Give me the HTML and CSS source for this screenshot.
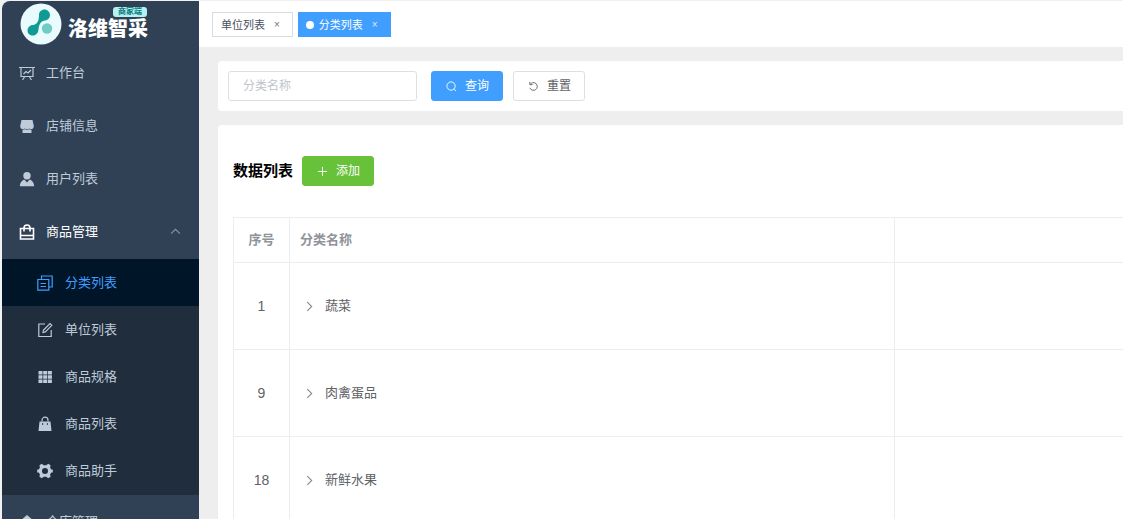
FILE: index.html
```html
<!DOCTYPE html>
<html lang="zh-CN">
<head>
<meta charset="utf-8">
<title>洛维智采 - 分类列表</title>
<link rel="stylesheet" href="styles.css">
</head>
<body>
<div class="app">
  <aside class="sidebar">
    <div class="brand">
      <svg class="brand-mark" viewBox="0 0 42 42" aria-hidden="true">
        <circle cx="21" cy="21" r="20.5" fill="#e9fbfc"/>
        <path d="M19 12c0-3.200 2.500-5.500 5.500-5.500S30 9 30 12s-2.500 5.500-5.500 5.500c-4 .8-5.500 4-6 9-.3 3.500-2.500 6-5.500 6S7.500 30.500 7.500 27.500s2.500-5.500 5.500-5.500c4-.5 6-4 6-10z" fill="#0f9a94"/>
        <circle cx="27" cy="25.500" r="5.200" fill="#6fcdc3"/>
      </svg>
      <div class="brand-text">
        <span class="brand-badge">商家端</span>
        <span class="brand-name">洛维智采</span>
      </div>
    </div>
    <nav>
      <a class="item" href="#"><svg class="icon" viewBox="0 0 16 16"><g class="line"><path d="M0 2.500h16M2 2.500v9h12v-9M5.500 12l-2 3M10.500 12l2 3M4.500 9l2.500-2.500L9 8l3-3"/></g></svg><span>工作台</span></a>
      <a class="item" href="#"><svg class="icon" viewBox="0 0 16 16"><path d="M2.500 2h11l1.300 6c0 1.500-.6 2.500-1.300 2.700-1.500.5-2.500.2-3.200-.3-1.400.8-3.200.8-4.600 0-.7.500-1.700.8-3.200.3C1.800 10.500 1.200 9.500 1.200 8zM3.500 11.700c1 0 1.800-.2 2.300-.5 1.400.6 3 .6 4.400 0 .5.300 1.300.5 2.300.5V15h-9z"/></svg><span>店铺信息</span></a>
      <a class="item" href="#"><svg class="icon" viewBox="0 0 16 16"><circle cx="8" cy="4.700" r="3.700"/><path d="M.8 15.200c.2-3.500 1.800-5.700 4.500-6.700L8 11.500l2.700-3c2.700 1 4.300 3.200 4.500 6.700z"/></svg><span>用户列表</span></a>
      <a class="item open" href="#"><svg class="icon" viewBox="0 0 16 16"><g class="line thick"><path d="M1.500 4.500h13v10.500h-13zM5 7.500V4a3 3 0 0 1 6 0v3.500M1.500 11.500h13"/></g></svg><span>商品管理</span><svg class="caret" viewBox="0 0 10 10"><path d="M1 7l4-4 4 4"/></svg></a>
      <div class="submenu">
        <a class="subitem active" href="#"><svg class="icon" viewBox="0 0 16 16"><g class="line"><path d="M.8 4.500h11v10.700h-11zM4.500 4.500V1h10.700v11h-3.400M3.500 8.500h5.500M3.500 11.500h5.500"/></g></svg><span>分类列表</span></a>
        <a class="subitem" href="#"><svg class="icon" viewBox="0 0 16 16"><g class="line"><path d="M8 2H1.800v12.500h12.400V8M6 10.500l.5-2.500 6.500-6.500 1.800 1.800L8.300 9.900z"/></g></svg><span>单位列表</span></a>
        <a class="subitem" href="#"><svg class="icon" viewBox="0 0 16 16"><path d="M1.500 2h4v3.500h-4zM6.200 2h4v3.500h-4zM10.900 2h4v3.500h-4zM1.500 6.300h4v3.500h-4zM6.200 6.300h4v3.500h-4zM10.900 6.300h4v3.500h-4zM1.500 10.600h4v3.500h-4zM6.200 10.600h4v3.500h-4zM10.900 10.600h4v3.500h-4z"/></svg><span>商品规格</span></a>
        <a class="subitem" href="#"><svg class="icon" viewBox="0 0 16 16"><path fill-rule="evenodd" d="M2.500 5.500h11l1 9.500h-13zM5 7.300v1.400h1.200V7.300zM9.800 7.300v1.400H11V7.300z"/><g class="line"><path d="M5 5.500V4.200a3 3 0 0 1 6 0v1.300"/></g></svg><span>商品列表</span></a>
        <a class="subitem" href="#"><svg class="icon" viewBox="0 0 16 16"><path fill-rule="evenodd" d="M4.800.8l1.900 1.400h2.600L11.200.8l2.400 1.500-.5 2.200 1.100 2h1.600v3h-1.600l-1.100 2 .5 2.200-2.400 1.500-1.900-1.400H6.700l-1.900 1.400-2.400-1.500.5-2.200-1.100-2H.2v-3h1.600l1.100-2-.5-2.200zM8 5a3 3 0 1 0 0 6 3 3 0 0 0 0-6z"/></svg><span>商品助手</span></a>
      </div>
      <a class="item" href="#"><svg class="icon" viewBox="0 0 16 16"><path d="M8 1l7 6h-2v8H3V7H1z"/></svg><span>仓库管理</span></a>
    </nav>
  </aside>
  <div class="page">
    <header class="tags">
      <a class="tag" href="#">单位列表<span class="close">×</span></a>
      <a class="tag current" href="#"><i class="dot"></i>分类列表<span class="close">×</span></a>
    </header>
    <main class="content">
      <form class="card search">
        <input class="field" type="text" placeholder="分类名称" aria-label="分类名称">
        <button class="btn primary" type="button"><svg class="btn-icon" viewBox="0 0 12 12"><circle cx="5.500" cy="5.500" r="4.500"/><path d="M9 9l2 2"/></svg>查询</button>
        <button class="btn" type="button"><svg class="btn-icon" viewBox="0 0 12 12"><path d="M2 1v3h3M2.300 3.800a4.200 4.200 0 1 1-.3 3.700"/></svg>重置</button>
      </form>
      <section class="card list">
        <div class="list-head">
          <h1 class="title">数据列表</h1>
          <button class="btn success" type="button"><svg class="btn-icon" viewBox="0 0 12 12"><path d="M6 1v10M1 6h10"/></svg>添加</button>
        </div>
        <table class="grid">
          <colgroup><col class="col-no"><col class="col-name"><col></colgroup>
          <thead><tr><th class="no">序号</th><th>分类名称</th><th></th></tr></thead>
          <tbody>
            <tr><td class="no">1</td><td><svg class="expand" viewBox="0 0 10 10"><path d="M3 1l4 4-4 4"/></svg>蔬菜</td><td></td></tr>
            <tr><td class="no">9</td><td><svg class="expand" viewBox="0 0 10 10"><path d="M3 1l4 4-4 4"/></svg>肉禽蛋品</td><td></td></tr>
            <tr><td class="no">18</td><td><svg class="expand" viewBox="0 0 10 10"><path d="M3 1l4 4-4 4"/></svg>新鲜水果</td><td></td></tr>
          </tbody>
        </table>
      </section>
    </main>
  </div>
</div>
</body>
</html>
```

FILE: styles.css
```css
* { box-sizing: border-box; }

body {
  margin: 0;
  background: #f0f1f2;
  color: #606266;
  font: 13px/20px "Liberation Sans", "Noto Sans CJK SC", sans-serif;
}

a { color: inherit; text-decoration: none; }

.app {
  display: flex;
  height: 100vh;
  overflow: hidden;
  padding: 1px 0 0 2px;
}

/* Sidebar */
.sidebar {
  flex: 0 0 197px;
  overflow: hidden;
  background: #304156;
  border-top-left-radius: 8px;
  color: #bfcbd9;
}

.brand {
  display: flex;
  align-items: flex-start;
  gap: 6px;
  height: 45px;
  padding: 2px 0 0 18px;
}

.brand-mark { width: 42px; height: 42px; }

.brand-text {
  display: flex;
  flex-direction: column;
  padding-top: 4px;
}

.brand-badge {
  align-self: flex-end;
  width: 34px;
  margin-right: 1px;
  border-radius: 3px;
  background: #b5f1f0;
  color: #0b7c80;
  font-size: 8px;
  font-weight: 700;
  line-height: 10px;
  text-align: center;
}

.brand-name {
  color: #fff;
  font-size: 20px;
  font-weight: 900;
  line-height: 24px;
}

.item, .subitem { display: flex; align-items: center; }

.item {
  height: 53px;
  padding: 0 18px 0 17px;
  gap: 11px;
}

.item.open { color: #fff; }

.icon {
  flex: none;
  width: 16px;
  height: 16px;
  fill: currentColor;
}

.line { fill: none; stroke: currentColor; stroke-width: 1.2; }
.thick { stroke-width: 1.6; }

.caret {
  width: 11px;
  height: 11px;
  margin-left: auto;
  fill: none;
  stroke: #8793a1;
}

.submenu {
  display: grid;
  grid-auto-rows: 1fr;
  min-height: 236px;
  margin-top: 1px;
  background: #1f2d3d;
}

.subitem { padding-left: 35px; gap: 12px; }

.subitem.active { background: #001528; color: #409eff; }

/* Tag bar */
.page {
  flex: 1;
  display: flex;
  flex-direction: column;
  min-width: 0;
  background: #eee;
}

.tags {
  display: flex;
  gap: 5px;
  padding: 11px 13px 10px;
  background: #fff;
}

.tag {
  display: flex;
  align-items: center;
  height: 25px;
  padding: 0 12px 0 8px;
  border: 1px solid #d8dce5;
  color: #495060;
  font-size: 11px;
}

.tag.current {
  padding-left: 7px;
  border-color: #409eff;
  background: #409eff;
  color: #fff;
}

.dot {
  width: 8px;
  height: 8px;
  margin-right: 5px;
  border-radius: 50%;
  background: #fff;
}

.close { margin-left: 9px; font-size: 10px; opacity: 0.8; }

/* Content */
.content {
  flex: 1;
  display: flex;
  flex-direction: column;
  gap: 14px;
  padding: 14px 0 0 19px;
}

.card {
  background: #fff;
  border-radius: 4px 0 0 4px;
}

.search { display: flex; padding: 10px; }

.field {
  width: 189px;
  height: 30px;
  margin-right: 14px;
  padding: 0 14px;
  border: 1px solid #dcdfe6;
  border-radius: 3px;
  background: #fff;
  font: inherit;
  font-size: 12px;
}

.field::placeholder { color: #c0c4cc; }

.btn {
  display: flex;
  align-items: center;
  gap: 8px;
  height: 30px;
  padding: 0 13px 0 14px;
  border: 1px solid #dcdfe6;
  border-radius: 3px;
  background: #fff;
  color: #606266;
  font: inherit;
  font-size: 12px;
}

.btn + .btn { margin-left: 10px; }
.btn.primary { border-color: #409eff; background: #409eff; color: #fff; }
.btn.success { border-color: #67c23a; background: #67c23a; color: #fff; }

.btn-icon {
  width: 11px;
  height: 11px;
  fill: none;
  stroke: currentColor;
}

.list { flex: 1; padding: 31px 0 0 15px; }

.list-head {
  display: flex;
  align-items: center;
  gap: 9px;
  margin-bottom: 31px;
}

.title { margin: 0; color: #000; font-size: 15px; font-weight: 700; }

.grid {
  width: 100%;
  table-layout: fixed;
  border-collapse: separate;
  border-spacing: 0;
  border-top: 1px solid #ebeef0;
  border-left: 1px solid #ebeef0;
}

.col-no { width: 56px; }
.col-name { width: 605px; }

.grid th, .grid td {
  padding: 0 10px;
  border-right: 1px solid #ebeef0;
  border-bottom: 1px solid #ebeef0;
  text-align: left;
}

.grid th:last-child, .grid td:last-child { border-right: 0; }
.grid th { height: 45px; color: #909399; font-weight: 700; }
.grid td { height: 87px; }
.grid .no { text-align: center; }
.grid td.no { font-size: 14px; }

.expand {
  width: 11px;
  height: 11px;
  margin: 0 10px 0 4px;
  fill: none;
  stroke: #85888e;
  vertical-align: middle;
}
```
